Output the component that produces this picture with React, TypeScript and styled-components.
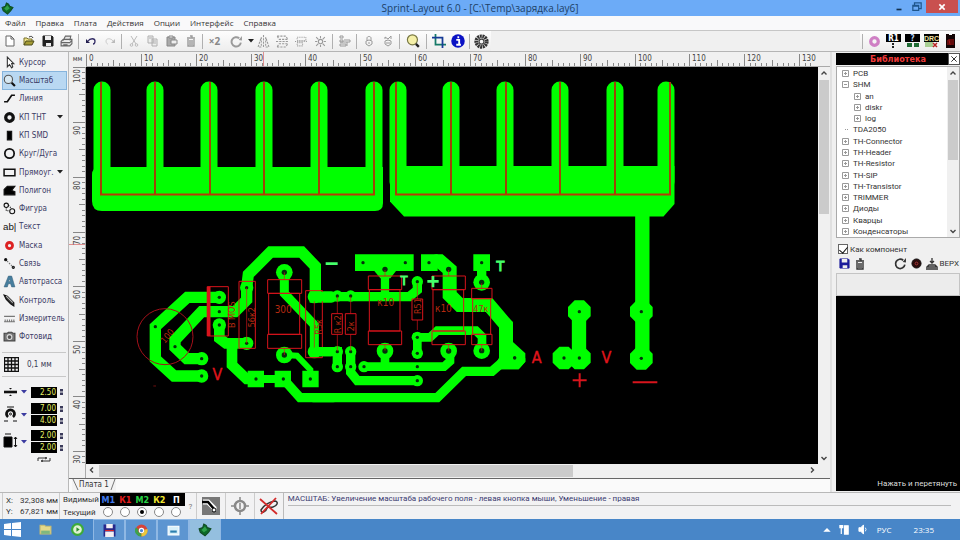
import React from "react";
import styled, { createGlobalStyle, css } from "styled-components";

const UI = `"DejaVu Sans Condensed", "Noto Sans", sans-serif`;
const NARROW = `Roboto, "Noto Sans", sans-serif`;
const SEGOE = `"Open Sans", "Noto Sans", sans-serif`;

const Global = createGlobalStyle`
  * { box-sizing: border-box; }
  html, body, #root { height: 100%; margin: 0; }
  body { background: #f0f0f0; font-family: ${UI}; font-size: 8px; color: #333; overflow: hidden; }
  button, input { font: inherit; color: inherit; margin: 0; padding: 0; border: 0; background: none; }
  svg { display: block; flex: none; }
`;

const Window = styled.div`
  height: 100vh;
  display: flex;
  flex-direction: column;
`;

const TitleBar = styled.header`
  display: flex;
  height: 16px;
  background: #6cabf7;
`;
const TitleSide = styled.div<{ $end?: boolean }>`
  flex: 1;
  display: flex;
  align-items: ${(p) => (p.$end ? "flex-start" : "center")};
  justify-content: ${(p) => (p.$end ? "flex-end" : "flex-start")};
  padding: 0 2px 0 1px;
`;
const Title = styled.h1`
  margin: 0;
  font: 400 10px/16px ${SEGOE};
  color: #1d3f66;
  white-space: nowrap;
`;
const WindowButton = styled.button<{ $close?: boolean }>`
  display: grid;
  place-items: center;
  width: ${(p) => (p.$close ? "32px" : "18px")};
  height: 13px;
  background: ${(p) => (p.$close ? "#c9504f" : "transparent")};
`;

const MenuBar = styled.nav`
  display: flex;
  gap: 10px;
  height: 14px;
  padding-left: 5px;
  background: #f9f9fa;
`;
const MenuItem = styled.button`
  font: 8px/14px ${SEGOE};
  color: #333;
`;

const Toolbar = styled.div`
  display: flex;
  align-items: center;
  height: 22px;
  background: #f0f0f0;
  border-top: 1px solid #c6c6c6;
  border-bottom: 1px solid #b4b4b4;
`;
const ToolbarFade = styled.div<{ $end?: boolean }>`
  display: flex;
  align-items: center;
  height: 20px;
  background: linear-gradient(#fdfdfd, #ededed);
  margin-left: ${(p) => (p.$end ? "auto" : "0")};
`;
const ToolButton = styled.button<{ $w?: number; $off?: boolean }>`
  display: grid;
  place-items: center;
  width: ${(p) => p.$w || 19}px;
  height: 20px;
  color: ${(p) => (p.$off ? "#9a9a9a" : "#222")};
`;
const Times = styled.span`
  font: 700 10px ${SEGOE};
  color: #888;
`;
const Divider = styled.span`
  width: 1px;
  height: 15px;
  margin: 0 2px;
  background: #b0b0b0;
`;

const Main = styled.main`
  flex: 1;
  min-height: 0;
  display: flex;
`;
const Sidebar = styled.aside`
  width: 69px;
  padding: 1px 2px 0 2px;
  border-right: 1px solid #b9b9b9;
  background: #f2f2f3;
`;
const ToolList = styled.div`
  display: grid;
  grid-template-rows: repeat(16, 1fr);
  height: 293px;
`;
const Tool = styled.button<{ $on?: boolean }>`
  display: flex;
  align-items: center;
  gap: 3px;
  width: 65px;
  padding-right: 3px;
  border: 1px solid ${(p) => (p.$on ? "#86b4dc" : "transparent")};
  background: ${(p) => (p.$on ? "#b9d8f2" : "transparent")};
  color: #3c3c66;
  text-align: left;
  white-space: nowrap;
`;
const ToolLabel = styled.span`
  flex: 1;
`;
const Section = styled.div`
  display: flex;
  align-items: center;
  height: 25px;
  margin-top: 6px;
  padding-left: 2px;
  border-top: 1px solid #c8c8c8;
  border-bottom: 1px solid #c8c8c8;
`;
const GridButton = styled.button`
  display: flex;
  align-items: center;
  gap: 8px;
  color: #3c3c55;
`;
const Sizes = styled.div`
  display: flex;
  flex-direction: column;
  gap: 4px;
  padding-top: 8px;
`;
const SizeRow = styled.div`
  display: flex;
  align-items: center;
  gap: 2px;
`;
const SizeFields = styled.div`
  display: flex;
  flex-direction: column;
  gap: 1px;
  margin-left: 2px;
`;
const SizeField = styled.label`
  display: flex;
  align-items: center;
  gap: 3px;
`;
const SizeInput = styled.input`
  width: 26px;
  height: 11px;
  padding-right: 1px;
  background: #000;
  color: #e6f062;
  font: 8px/11px ${UI};
  text-align: right;
`;
const Swap = styled.button`
  align-self: center;
  margin-left: 20px;
  height: 5px;
`;

const Workspace = styled.section`
  flex: 1;
  min-width: 0;
  display: flex;
  flex-direction: column;
  background: #f0f0f0;
`;
const Board = styled.div`
  flex: 1;
  min-height: 0;
  display: grid;
  grid-template: 15px minmax(0, 1fr) 14px / 17px minmax(0, 1fr) 12px;
`;
const Unit = styled.div`
  font-size: 7px;
  line-height: 14px;
  text-align: center;
`;
const TopRuler = styled.div`
  overflow: hidden;
  grid-column: span 2;
  border-bottom: 1px solid #aaa;
`;
const SideRuler = styled.div`
  overflow: hidden;
  grid-row: span 2;
  border-right: 1px solid #aaa;
`;
const Canvas = styled.div`
  overflow: hidden;
  background: #000;
`;
const Scroll = styled.div<{ $row?: boolean }>`
  display: flex;
  flex-direction: ${(p) => (p.$row ? "row" : "column")};
  background: #f0f0f0;
  min-height: 0;
`;
const Arrow = styled.button`
  display: grid;
  place-items: center;
  width: 12px;
  height: 12px;
  color: #444;
`;
const Track = styled.div<{ $row?: boolean }>`
  flex: 1;
  min-height: 0;
  display: flex;
  flex-direction: ${(p) => (p.$row ? "row" : "column")};
`;
const Thumb = styled.div<{ $part: number }>`
  flex: 0 0 ${(p) => p.$part}%;
  margin: 1px;
  background: #cbcbcb;
`;
const TabStrip = styled.div`
  height: 14px;
  display: flex;
  border-top: 1px solid #666;
  background: #fafafa;
`;
const BoardTab = styled.button`
  display: flex;
  align-items: flex-start;
  line-height: 11px;
  background: #f3f3f3;
  margin-left: 3px;
`;

const Library = styled.aside`
  width: 130px;
  display: flex;
  flex-direction: column;
  padding: 1px 0 1px 4px;
  border-left: 2px solid #e0e0e0;
  font-family: ${NARROW};
`;
const LibraryHead = styled.div`
  display: flex;
  height: 12px;
  background: #000;
`;
const LibraryTitle = styled.h2`
  flex: 1;
  margin: 0;
  padding-left: 12px;
  font: 700 9px/12px ${UI};
  color: #f03a3a;
  text-align: center;
`;
const CloseButton = styled.button`
  display: grid;
  place-items: center;
  width: 12px;
  background: #fff;
  border: 1px solid #555;
`;
const TreeBox = styled.div`
  display: flex;
  height: 172px;
  margin-top: 1px;
  border: 1px solid #aaa;
  background: #fff;
`;
const Tree = styled.ul`
  flex: 1;
  margin: 0;
  padding: 1px 0 0 5px;
  list-style: none;
  display: grid;
  grid-template-rows: repeat(15, 1fr);
  color: #333;
`;
const Node = styled.li<{ $deep?: boolean }>`
  display: flex;
  align-items: center;
  gap: 4px;
  line-height: 11px;
  padding-left: ${(p) => (p.$deep ? "12px" : "0")};
`;
const Check = styled.label`
  display: flex;
  align-items: center;
  gap: 2px;
  height: 16px;
  padding: 6px 2px 0;
`;
const CheckInput = styled.input`
  appearance: none;
  flex: none;
  width: 10px;
  height: 10px;
  border: 1px solid #666;
  background: #fff;
  display: grid;
  place-items: center;
  &:checked::after {
    content: "";
    width: 4px;
    height: 7px;
    border: solid #111;
    border-width: 0 1px 1px 0;
    transform: rotate(40deg);
  }
`;
const LibraryTools = styled.div`
  display: flex;
  align-items: center;
  gap: 4px;
  height: 19px;
  padding: 0 1px 0 3px;
`;
const Spacer = styled.span`
  flex: 1;
`;
const BareButton = styled.button`
  display: flex;
  align-items: center;
  gap: 2px;
`;
const InfoBox = styled.div`
  height: 23px;
  border: 1px solid #c4c4c4;
  background: #ececec;
`;
const Preview = styled.div`
  flex: 1;
  display: flex;
  align-items: flex-end;
  justify-content: flex-end;
  padding: 2px 3px;
  background: #000;
  color: #ddd;
  line-height: 10px;
`;

const StatusBar = styled.footer`
  display: flex;
  height: 27px;
  border-top: 1px solid #b8b8b8;
  background: #f2f2f3;
  font-family: ${NARROW};
`;
const Coords = styled.dl`
  display: grid;
  grid-template-columns: auto 1fr;
  width: 58px;
  margin: 0 0 0 2px;
  padding: 2px 1px 2px 3px;
  border-left: 1px solid #ccc;
  border-right: 1px solid #ccc;
  line-height: 11px;
`;
const CoordName = styled.dt``;
const CoordValue = styled.dd`
  margin: 0;
  text-align: right;
`;
const Layers = styled.table`
  margin-left: 3px;
  border-collapse: collapse;
  height: 25px;
  line-height: 11px;
`;
const LayerTitle = styled.th`
  padding: 0 1px 0 0;
  width: 34px;
  font-weight: 400;
  text-align: left;
  font-size: 8px;
`;
const LayerName = styled.th<{ $c: string }>`
  width: 17px;
  padding: 0;
  background: #000;
  color: ${(p) => p.$c};
  font: 700 9px/12px ${UI};
`;
const LayerCell = styled.td`
  padding: 0;
`;
const LayerRadio = styled.input`
  appearance: none;
  display: grid;
  place-items: center;
  width: 10px;
  height: 10px;
  margin: 0 auto;
  border: 1px solid #888;
  border-radius: 50%;
  background: #fff;
  &:checked::after {
    content: "";
    width: 4px;
    height: 4px;
    border-radius: 50%;
    background: #000;
  }
`;
const HelpButton = styled.button`
  width: 11px;
  color: #777;
`;
const ModeButton = styled.button`
  display: grid;
  place-items: center;
  width: 29px;
  border-left: 1px solid #ccc;
`;
const Hint = styled.p`
  flex: 1;
  margin: 0 9px 0 0;
  padding-left: 4px;
  border-left: 1px solid #bbb;
  color: #3a3a70;
`;
const HintText = styled.span`
  display: block;
  line-height: 12px;
  border-bottom: 1px solid #bbb;
`;

const Taskbar = styled.footer`
  display: flex;
  height: 21px;
  background: #4886c8;
  color: #fff;
`;
const TaskButton = styled.button<{ $open?: boolean; $active?: boolean }>`
  display: grid;
  place-items: center;
  width: 32px;
  ${(p) =>
    p.$open &&
    css`
      border: 1px solid #8fb8e4;
      border-bottom: 0;
      background: ${p.$active ? "#94bfdf" : "#5d95d1"};
    `}
`;
const Start = styled(TaskButton)`
  width: 29px;
  padding-right: 4px;
`;
const Tray = styled.div`
  margin-left: auto;
  display: flex;
  align-items: center;
  gap: 8px;
  padding-right: 26px;
  font: 8px ${SEGOE};
`;
const Lang = styled.span`
  margin-right: 14px;
`;

type IconProps = { s?: number; children: React.ReactNode; w?: number };
const Icon = ({ s = 12, w = 1, children }: IconProps) => (
  <svg width={s} height={s} viewBox="0 0 12 12" fill="none" stroke="currentColor" strokeWidth={w} aria-hidden="true">
    {children}
  </svg>
);

const Gem = ({ s = 12 }) => (
  <Icon s={s}>
    <path d="M1 5l3-1 1-3 2 1 1 2 3 1-2 3-3 3-4-3z" fill="#0b6b27" stroke="#114d24" />
    <path d="M3 6l3-3 2 3-3 2z" fill="#2fa04a" stroke="none" />
  </Icon>
);
const Floppy = ({ c = "#222", s = 12 }: { c?: string; s?: number }) => (
  <Icon s={s}>
    <path d="M1 1h9l1 1v9H1z" fill={c} stroke={c} />
    <path d="M3 1h6v4H3zM4 8h5v3H4z" fill="#eee" stroke="none" />
  </Icon>
);
const Trash = () => (
  <Icon>
    <path d="M2 3h8M5 1h2v2M3 4v7h6V4M5 5v5M7 5v5" strokeWidth="1.4" />
  </Icon>
);
const Rotate = ({ s = 13, w = 1.8 }) => (
  <Icon s={s} w={w}>
    <path d="M10 7a4.3 4.3 0 1 1-1.5-4" />
    <path d="M8 4.5 11 5V1z" fill="currentColor" stroke="none" />
  </Icon>
);
const Caret = ({ c = "#222" }) => (
  <svg width="6" height="4" viewBox="0 0 6 4" aria-hidden="true">
    <path d="M0 0h6L3 3.5z" fill={c} />
  </svg>
);
const Chevron = ({ d }: { d: string }) => (
  <svg width="8" height="8" viewBox="0 0 8 8" fill="none" stroke="currentColor" strokeWidth="1.4" aria-hidden="true">
    <path d={d} />
  </svg>
);
const UP = "M1.5 5.5 4 3l2.5 2.5";
const DOWN = "M1.5 3 4 5.5 6.5 3";
const LEFT = "M5 1.5 2.5 4 5 6.5";
const RIGHT = "M3 1.5 5.5 4 3 6.5";

type Item = { n: string; i?: React.ReactNode; off?: boolean; w?: number } | null;
const toolbar: Item[] = [
  { n: "Новый", i: <Icon><path d="M2 1h5l3 3v7H2zM7 1v3h3" stroke="#666" fill="#fff" /></Icon> },
  { n: "Открыть", i: <Icon><path d="M1 10V3h3l1 1h4v2" fill="#f2e58c" stroke="#77702a" /><path d="M1 10 3 6h8l-2 4z" fill="#a49b35" stroke="#4d4c1b" /><path d="M6 2c2-1 3-1 4 1" stroke="#333" /></Icon> },
  { n: "Сохранить", i: <Floppy /> },
  { n: "Печать", i: <Icon s={13}><path d="M3 5 5 1h5L9 5M1 6l2-2h8v4l-2 2H1zM1 7h8l2-2M3 9h4" stroke="#666" fill="#e6e6e6" /></Icon> },
  null,
  { n: "Отменить", i: <Icon w={1.3}><path d="M3 6c2-3 7-3 7 0 0 2-1 3-2 3" stroke="#332d66" /><path d="M1 4v4h4z" fill="#221d4d" stroke="none" /></Icon> },
  { n: "Вернуть", off: true, i: <Icon><path d="M9 6C7 3 2 3 2 6c0 2 1 3 2 3" stroke="#ccc" /><path d="M11 4v4H7z" fill="#bbb" stroke="none" /></Icon> },
  null,
  { n: "Вырезать", off: true, i: <Icon><path d="m3 1 5 8M9 1 4 9" stroke="#bbb" /><circle cx="3.500" cy="10" r="1.300" stroke="#bbb" /><circle cx="8.500" cy="10" r="1.300" stroke="#bbb" /></Icon> },
  { n: "Копировать", off: true, i: <Icon><path d="M1 1h5v7H1zM5 4h5v7H5zM6 6h3M6 8h3M2 3h3" stroke="#b0b0b0" fill="#eee" /></Icon> },
  { n: "Вставить", off: true, i: <Icon><path d="M1 2h8v9H1z" fill="#aaa" stroke="#888" /><path d="M3 1h4v2H3zM5 5h6v4H5z" fill="#eee" stroke="#888" /></Icon> },
  { n: "Удалить", off: true, i: <Trash /> },
  null,
  { n: "Дублировать", i: <Times>×2</Times> },
  { n: "Повернуть", off: true, w: 24, i: <Rotate /> },
  { n: "Угол поворота", w: 6, i: <Caret /> },
  { n: "Отразить по горизонтали", off: true, i: <Icon s={13}><path d="M6 0v12M4 2v9H1zM8 2v9h3z" strokeDasharray="2 1" /></Icon> },
  { n: "Отразить по вертикали", off: true, i: <Icon s={13}><path d="M0 6h12M1 1h8l2 3H3zM1 11h8l2-3H3z" strokeDasharray="2 1" /></Icon> },
  { n: "Выровнять", off: true, i: <Icon s={13}><path d="M0 6h12M2 2h8v3H2zM2 7h5v3H2z" strokeDasharray="1 1" /></Icon> },
  { n: "Привязать к сетке", off: true, i: <Icon s={13}><circle cx="6" cy="6" r="2" /><path d="M6 1v2M6 9v2M1 6h2M9 6h2M2 2l2 2M8 8l2 2M10 2 8 4M2 10l2-2" /></Icon> },
  null,
  { n: "Группировать", off: true, i: <Icon><path d="M1 1h3v2H1zM1 5h3v2H1zM5 5h6v2H1M1 9h6v2H1zM8 7v4" /></Icon> },
  null,
  { n: "Закрепить", off: true, i: <Icon><path d="M4 5V3c0-2 4-2 4 0v2M3 6l3-1 3 1v3l-3 2-3-2zM6 7v2" /></Icon> },
  { n: "Открепить", off: true, i: <Icon><path d="M3 4V2l3 2 3-3v3M3 6l3-1 3 1v3l-3 2-3-2zM4 8h4" /></Icon> },
  null,
  { n: "Масштаб", w: 22, i: <Icon s={14}><circle cx="5.500" cy="5" r="4.300" fill="#f5f0a8" stroke="#777743" /><path d="m8.500 8.500 2.500 2.500" stroke="#222" strokeWidth="2" /></Icon> },
  null,
  { n: "Шаблон", i: <Icon s={14} w={1.5}><path d="M3 0v9h9" stroke="#167a68" /><path d="M0 3h9v9" stroke="#173c96" /></Icon> },
  { n: "Информация", i: <Icon s={14}><circle cx="6" cy="6" r="5.800" fill="#0b12c4" stroke="none" /><path d="M4.500 5H7v4M4.500 9.200h4M5.500 2.800H7" stroke="#fff" strokeWidth="1.600" /></Icon> },
  null,
  { n: "Контроль", i: <Icon s={15}><circle cx="6" cy="6" r="4.200" stroke="#333" strokeWidth="3" strokeDasharray="1.500 .5" /><circle cx="6" cy="6" r="2" stroke="#444" /></Icon> },
];

const Plate = ({ t, c, low }: { t: string; c: string; low: React.ReactNode }) => (
  <svg width="15" height="14" viewBox="0 0 15 14" aria-hidden="true">
    <path d="M0 0h15v8H0z" fill="#000" />
    <text x="7.500" y="7" fontSize={t.length > 2 ? 7 : 8} fontWeight="700" textAnchor="middle" fill={c} fontFamily={t.length > 2 ? "Liberation Sans" : "DejaVu Sans Condensed"}>{t}</text>
    {low}
  </svg>
);
const panels: { n: string; i: React.ReactNode }[] = [
  { n: "Прозрачность", i: <Icon s={13}><circle cx="6" cy="6" r="3.500" stroke="#cf7fc4" strokeWidth="3" /></Icon> },
  { n: "Компоненты", i: <Plate t="R1" c="#fff" low={<path d="M6 9h2v2H6zM6 12h2v2H6z" fill="#222" />} /> },
  { n: "Свойства", i: <Plate t="?" c="#b9d8f7" low={<path d="M2 9h5v4H2zM9 9h5v4H9z" fill="#206c35" />} /> },
  { n: "Проверка", i: <Plate t="DRC" c="#f0e0a0" low={<><path d="M1 8h8v5H1z" fill="#a8cf93" /><path d="m9 9 4 4m0-4-4 4" stroke="#b82323" strokeWidth="1.500" /></>} /> },
  { n: "Библиотека", i: <svg width="9" height="14" viewBox="0 0 9 14" aria-hidden="true"><path d="M0 0h3v1h3V0h3v14H0z" fill="#120303" /><path d="M2 6v5M3 5l1 6M5 5v6M7 5v6" stroke="#b31515" /></svg> },
];

const tools: { n: string; i: React.ReactNode; menu?: boolean }[] = [
  { n: "Курсор", i: <path d="M4 1v9l2-2 2 3 1-1-1-3h2z" fill="#fff" stroke="#333" /> },
  { n: "Масштаб", i: <><circle cx="5" cy="5" r="3.800" fill="#d7e8f2" stroke="#555" /><path d="m8 8 3 3" stroke="#111" strokeWidth="2" /></> },
  { n: "Линия", i: <path d="M1 9h3l4-6h3" strokeWidth="1.600" /> },
  { n: "КП THT", menu: true, i: <circle cx="6" cy="6" r="3.500" strokeWidth="3" /> },
  { n: "КП SMD", i: <path d="M4 2h4v8H4z" fill="#000" /> },
  { n: "Круг/Дуга", i: <circle cx="6" cy="6" r="4.300" strokeWidth="1.600" /> },
  { n: "Прямоуг.", menu: true, i: <path d="M1 3h10v6H1z" strokeWidth="1.400" /> },
  { n: "Полигон", i: <path d="M1 10V5l3-3h7L8 6l3 1v3z" fill="#000" /> },
  { n: "Фигура", i: <><circle cx="3" cy="3" r="2" /><circle cx="8.500" cy="8.500" r="2.300" /><path d="M3 5v3h3M5 3l3 3" strokeDasharray="1 1" /></> },
  { n: "Текст", i: <text x="0" y="9" fontSize="9" fontFamily="Liberation Sans" fill="#111" stroke="none">ab|</text> },
  { n: "Маска", i: <circle cx="6" cy="6" r="2.800" stroke="#d22" strokeWidth="2.600" /> },
  { n: "Связь", i: <><path d="m2 2 8 8" strokeDasharray="1.500 1" stroke="#777" /><circle cx="2.500" cy="2.500" r="1" fill="#000" /><circle cx="9.500" cy="9.500" r="1" /></> },
  { n: "Автотрасса", i: <path d="M1 11 5 1h3l3 10H8L7 8H5l-1 3zM6 4 5 6h2z" fill="#467e9e" stroke="#39607a" strokeWidth=".5" /> },
  { n: "Контроль", i: <><path d="m1 1 3 1 6 6v3L7 9 3 5z" fill="#333" /><path d="m3 2 6 6" stroke="#bbb" /></> },
  { n: "Измеритель", i: <path d="M1 4h10M1 9h10M2 7v2M4 7v2M6 7v2M8 7v2M10 7v2" stroke="#777" /> },
  { n: "Фотовид", i: <><path d="M1 3h3l1-1h3l1 1h2v7H1z" fill="#777" stroke="#444" /><circle cx="6" cy="6.500" r="2.200" stroke="#ddd" fill="#555" /></> },
];

const Spin = () => (
  <svg width="3" height="8" viewBox="0 0 3 8" aria-hidden="true"><path d="M0 1h3v2.500H0zM0 4.500h3V7H0z" fill="#3a3a5a" /></svg>
);
const sizes: { n: string; v: string[]; i: React.ReactNode }[] = [
  { n: "Ширина", v: ["2.50"], i: <><path d="M0 5h13" strokeWidth="2.600" /><path d="M5 1h3l-1.500 1.500zM5 9h3l-1.500-1.500z" fill="#111" stroke="none" /></> },
  { n: "Площадка", v: ["7.00", "4.00"], i: <><path d="M4 8a4 4 0 1 1 5 0" strokeWidth="2.800" /><circle cx="6.500" cy="5" r="1" /><path d="M0 12h4M9 12h4M3 -2h7" /></> },
  { n: "SMD", v: ["2.00", "2.00"], i: <><path d="M0 1h8v10H0z" fill="#000" /><path d="M11.500 1v10M10 3l1.500-2L13 3M10 9l1.500 2L13 9M1 -2h6" /></> },
];

const tree: { t: string; deep?: boolean; k?: "+" | "-" }[] = [
  { t: "PCB", k: "+" }, { t: "SHM", k: "-" },
  { t: "an", k: "+", deep: true }, { t: "diskr", k: "+", deep: true }, { t: "log", k: "+", deep: true },
  { t: "TDA2050" }, { t: "TH-Connector", k: "+" }, { t: "TH-Header", k: "+" }, { t: "TH-Resistor", k: "+" },
  { t: "TH-SIP", k: "+" }, { t: "TH-Transistor", k: "+" }, { t: "TRIMMER", k: "+" },
  { t: "Диоды", k: "+" }, { t: "Кварцы", k: "+" }, { t: "Конденсаторы", k: "+" },
];
const Twisty = ({ k }: { k?: "+" | "-" }) => (
  <svg width="7" height="7" viewBox="0 0 7 7" stroke="#999" fill="none" aria-hidden="true">
    {k ? <path d={`M.5.5h6v6h-6zM2 3.500h3${k === "+" ? "M3.500 2v3" : ""}`} /> : <path d="M3 3.500h4" strokeDasharray="1 1" />}
  </svg>
);

/* Rulers: one millimetre is 5.485 px at the current zoom. */
const MM = 5.485;
const TopScale = () => (
  <svg width="732" height="14" viewBox="0 0 732 14" stroke="#888" fontFamily="DejaVu Sans Condensed" fontSize="8">
    {Array.from({ length: 133 }, (_, i) => (
      <path key={i} d={`M${Math.round(i * MM) + 0.5} 14v${i % 10 === 0 ? -12 : i % 5 === 0 ? -6 : -3}`} />
    ))}
    <path d="M177.500 0v14" stroke="#e09090" />
    {Array.from({ length: 14 }, (_, i) => (
      <text key={i} x={Math.round(i * 10 * MM) + 3} y="9" fill="#444" stroke="none">{i * 10}</text>
    ))}
  </svg>
);
const SideScale = () => (
  <svg width="16" height="396" viewBox="0 0 16 396" stroke="#888" fontFamily="DejaVu Sans Condensed" fontSize="8">
    {Array.from({ length: 73 }, (_, i) => (
      <path key={i} d={`M16 ${Math.round(i * MM) + 0.5}h${i % 10 === 0 ? -12 : i % 5 === 0 ? -6 : -3}`} />
    ))}
    <path d="M0 177.500h16" stroke="#e09090" />
    {Array.from({ length: 8 }, (_, i) => (
      <text key={i} transform={`translate(11 ${Math.round(i * 10 * MM) + (i ? 13 : 16)}) rotate(-90)`} fill="#444" stroke="none">{100 - i * 10}</text>
    ))}
  </svg>
);

const G = "#00ff00";
const leftFingers = [102, 155, 209, 264, 319, 374];
const rightFingers = [398, 451, 505, 560, 615, 666];
const leftLines = [101, 155, 210, 264, 319, 374];
const rightLines = [396, 451, 506, 560, 615, 670];

const Trace = ({ d, w = 28 }: { d: string; w?: number }) => (
  <path d={d} stroke={G} strokeWidth={w} fill="none" strokeLinecap="round" strokeLinejoin="miter" />
);
const Holes = ({ at, r = 5 }: { at: number[][]; r?: number }) => (
  <>{at.map(([x, y]) => <circle key={`${x}-${y}`} cx={x} cy={y} r={r} fill="#03300a" />)}</>
);
const Pads = ({ at, r }: { at: number[][]; r: number }) => (
  <>{at.map(([x, y]) => <circle key={`${x}-${y}`} cx={x} cy={y} r={r} fill={G} />)}</>
);
const oct = (x: number, y: number) =>
  `M${x - 14} ${y - 34}h28l20 20v28l-20 20h-28l-20-20v-28z`;

const Pcb = () => (
  <svg width="732" height="396" viewBox="86 67 732 396" role="img" aria-label="Плата" fontFamily="DejaVu Sans Condensed">
    <path d="M92 175q0-8 8-8h283v36q0 8-8 8H102q-10 0-10-10z" fill={G} />
    <path d="M390 166h284.500v38l-11 12.500H404l-14-15z" fill={G} />
    {[...leftFingers, ...rightFingers].map((x) => (
      <path key={x} d={`M${x} 90v92`} stroke={G} strokeWidth="17" strokeLinecap="round" />
    ))}
    <g stroke="#a04408" strokeWidth="2" fill="none">
      {leftLines.map((x) => <path key={x} d={`M${x} 82v113`} />)}
      {rightLines.map((x) => <path key={x} d={`M${x} 82v113`} />)}
      <path d="M100 194.500h275M395 194.500h276" stroke="#b83a06" />
    </g>

    <g transform="translate(500 190) scale(.33333)">
      <path d="M427 70v435M237 365v140M190 504h48" stroke={G} strokeWidth="43" />
      <path d={oct(424, 365) + oct(424, 505) + oct(238, 365) + oct(238, 504) + oct(192, 504)} fill={G} />
      <path d="M0 365 38 395v60l38 35v25l-20 23H0z" fill={G} />
      <Holes at={[[424, 365], [424, 505], [238, 365], [238, 504], [192, 504], [44, 504]]} />
      <g stroke="#d8141c" strokeWidth="6" fill="none">
        <path d="M218 571h42M239 550v42M398 577h74" />
      </g>
      <g fill="#e0141c" fontSize="48" textAnchor="middle" stroke="#e0141c" strokeWidth="1">
        <text x="110" y="520">A</text>
        <text x="319" y="520">V</text>
      </g>
    </g>

    <g transform="translate(130 230) scale(.33333)">
      <Trace w={34} d="M268 202H172L76 290v97l56 51h83" />
      <Trace w={34} d="M215 386h-45l-35-34v-22l80-85h100l35-35v-37l5-40 67-67h93l41 43v92h48" />
      <Trace w={32} d="M268 285v40l20 15h62M306 345v60l44 42h28" />
      <Trace w={24} d="M378 447h82" />
      <Trace w={28} d="M460 447l50 56h100" />
      <path d="M353 422h49v50h-49zM434 422h49v50h-49zM517 422h49v50h-49z" fill={G} />
      <Trace w={27} d="M463 127v63l90 95v80h50" />
      <Trace w={18} d="M463 375l38 2 40 42v28" />
      <Pads r={25} at={[[463, 127], [463, 375]]} />
      <Pads r={20} at={[[268, 202], [268, 285], [350, 340], [215, 386], [215, 438], [553, 200], [553, 365], [350, 173]]} />
      <Holes at={[[268, 202], [268, 245], [268, 285], [350, 340], [350, 173], [76, 290], [135, 350], [215, 386], [215, 438], [553, 200], [553, 365], [378, 447], [460, 447], [541, 447]]} />
      <Holes r={8} at={[[463, 127], [463, 375]]} />
      <g fill="none" stroke="#d8141c" strokeWidth="3">
        <path d="M232 170h63v148h-63zM327 154h49v201h-49zM527 182h50v201h-50z" />
        <path d="M413 149h102v41H413zM416 190h93v123h-93zM413 313h102v42H413z" />
        <path d="M463 127v22M463 355v20M350 173v167M553 200v165" strokeWidth="2" />
        <circle cx="105" cy="320" r="84" stroke="#a5101a" />
        <path d="M236 170v148" strokeWidth="11" />
      </g>
      <g fill="#b52a10" fontSize="27">
        <text x="434" y="250" fontSize="30">300</text>
        <text transform="translate(374 292) rotate(-90)">56к2</text>
        <text transform="translate(315 294) rotate(-90)">B MOS</text>
        <text transform="translate(577 314) rotate(-90)">R5к</text>
        <text transform="translate(104 342) rotate(-50)">100</text>
      </g>
      <text x="262" y="449" textAnchor="middle" fontSize="48" fill="#e0141c" stroke="#e0141c" strokeWidth="1">V</text>
      <path d="M70 468h8" stroke="#701010" strokeWidth="3" />
    </g>

    <g transform="translate(320 230) scale(.33333)">
      <Trace d="M-20 200h288l24-20v-25" />
      <path d="M105 73h176v50h-53l-17 22h-30l-18-22h-58zM303 73h50v50h-50zM460 73h50v50h-50z" fill={G} />
      <Trace w={25} d="M195 118v82" />
      <Trace w={42} d="M350 94h10l29 25v76l30 30h88l51 60v100" />
      <Trace w={28} d="M485 100v57" />
      <Trace w={28} d="M-20 503h372l80-79h84l32-28" />
      <Trace w={28} d="M-10 365h62v45M92 365v62l20 25h180" />
      <Trace w={26} d="M132 410h240l18-16v-31M195 363v47" />
      <Trace w={26} d="M292 370v-48h38l22-20h116l18 18v42" />
      <Pads r={25} at={[[195, 363], [386, 363], [485, 362], [485, 157]]} />
      <Pads r={17} at={[[52, 198], [92, 198], [292, 155], [52, 365], [52, 410], [92, 365], [92, 410], [132, 410], [292, 322], [292, 370], [292, 452]]} />
      <path d="M536 385h80v10l-20 23h-76z" fill={G} />
      <Holes at={[[129, 98], [256, 98], [327, 98], [485, 98], [52, 198], [92, 198], [292, 155], [52, 365], [52, 410], [92, 365], [92, 410], [132, 410], [292, 322], [292, 370], [292, 410], [292, 452], [584, 384]]} />
      <Holes r={8} at={[[195, 118], [386, 118], [195, 363], [386, 363], [485, 362], [485, 157]]} />
      <g fill="none" stroke="#d8141c" strokeWidth="3">
        <path d="M145 138h100v41H145zM148 179h92v124h-92zM145 303h100v41H145z" />
        <path d="M336 138h100v41H336zM339 179h92v124h-92zM336 303h100v41H336z" />
        <path d="M455 175h61v31h-61zM458 206h54v107h-54zM455 313h61v31h-61z" />
        <path d="M35 251h32v62H35zM76 251h32v62H76zM276 207h32v63h-32z" />
        <path d="M52 200v51M52 313v50M92 200v51M92 313v50M292 160v47M292 270v30M195 120v18M195 344v18M386 120v18M386 344v18M485 344v18M485 160v15" strokeWidth="2" />
      </g>
      <g fill="#b52a10" fontSize="27">
        <text x="172" y="229" fontSize="30">к10</text>
        <text x="345" y="247" fontSize="30">к10</text>
        <text x="460" y="247">47к</text>
        <text transform="translate(62 310) rotate(-90)">R к2</text>
        <text transform="translate(102 304) rotate(-90)">2к</text>
        <text transform="translate(302 252) rotate(-90)">R51</text>
      </g>
      <g stroke="#45ff6a" strokeWidth="8" fill="none">
        <path d="M17 101h36M322 154h34M339 138v34" />
      </g>
      <g fill="#45ff6a" stroke="#45ff6a" strokeWidth="3" fontSize="42" textAnchor="middle">
        <text x="252" y="165" fontSize="36">T</text>
        <text x="541" y="123">T</text>
      </g>
    </g>
  </svg>
);

const layers = [
  { n: "М1", c: "#3f78e8" }, { n: "К1", c: "#e01c1c" }, { n: "М2", c: "#27d344" }, { n: "К2", c: "#f0e62e" }, { n: "П", c: "#fff" },
];

export default function App() {
  return (
    <Window>
      <Global />
      <TitleBar>
        <TitleSide><Gem s={13} /></TitleSide>
        <Title>Sprint-Layout 6.0 - [C:\Temp\зарядка.lay6]</Title>
        <TitleSide $end>
          <WindowButton aria-label="Свернуть"><Icon s={10}><path d="M3 9h6" stroke="#12304f" strokeWidth="2" /></Icon></WindowButton>
          <WindowButton aria-label="Восстановить"><Icon s={10}><path d="M1 4h7v6H1zM3 4V1h8v7H8M1 5h7" stroke="#1f568c" strokeWidth="1.500" /></Icon></WindowButton>
          <WindowButton $close aria-label="Закрыть"><Icon s={8}><path d="m2 2 8 8m0-8-8 8" stroke="#fff" strokeWidth="2.400" /></Icon></WindowButton>
        </TitleSide>
      </TitleBar>
      <MenuBar>
        {["Файл", "Правка", "Плата", "Действия", "Опции", "Интерфейс", "Справка"].map((m) => <MenuItem key={m}>{m}</MenuItem>)}
      </MenuBar>
      <Toolbar>
        <ToolbarFade>
          {toolbar.map((b, i) => b
            ? <ToolButton key={i} aria-label={b.n} $off={b.off} $w={b.w}>{b.i}</ToolButton>
            : <Divider key={i} />)}
        </ToolbarFade>
        <ToolbarFade $end>
          <Divider />
          {panels.map((p) => <ToolButton key={p.n} aria-label={p.n}>{p.i}</ToolButton>)}
        </ToolbarFade>
      </Toolbar>

      <Main>
        <Sidebar>
          <ToolList>
            {tools.map((t, i) => (
              <Tool key={t.n} $on={i === 1}>
                <Icon s={13}><g stroke="#111" strokeWidth="1">{t.i}</g></Icon>
                <ToolLabel>{t.n}</ToolLabel>
                {t.menu && <Caret />}
              </Tool>
            ))}
          </ToolList>
          <Section>
            <GridButton>
              <svg width="15" height="15" viewBox="0 0 15 15" stroke="#111" fill="none" aria-hidden="true">
                <path d="M.5.5h14v14H.5zM4 0v15M7.500 0v15M11 0v15M0 4h15M0 7.500h15M0 11h15" strokeWidth="1.300" />
              </svg>
              0,1 мм
            </GridButton>
          </Section>
          <Sizes>
            {sizes.map((s) => (
              <SizeRow key={s.n}>
                <svg width="17" height={s.v.length > 1 ? 17 : 14} viewBox={s.v.length > 1 ? "-2 -3 17 17" : "-2 -2 17 14"} stroke="#111" fill="none" aria-hidden="true">{s.i}</svg>
                <BareButton aria-label={s.n}><Caret c="#3b3ba0" /></BareButton>
                <SizeFields>
                  {s.v.map((v, i) => (
                    <SizeField key={i}>
                      <SizeInput aria-label={`${s.n} ${i + 1}`} defaultValue={v} />
                      <Spin />
                    </SizeField>
                  ))}
                </SizeFields>
              </SizeRow>
            ))}
            <Swap aria-label="Поменять местами">
              <svg width="14" height="5" viewBox="0 0 14 5" stroke="#333" fill="none"><path d="M1 4V1h8M5 4h8V1M8 0l2 1-2 1M6 3 4 4l2 1" /></svg>
            </Swap>
          </Sizes>
        </Sidebar>

        <Workspace>
          <Board>
            <Unit>мм</Unit>
            <TopRuler><TopScale /></TopRuler>
            <SideRuler><SideScale /></SideRuler>
            <Canvas><Pcb /></Canvas>
            <Scroll>
              <Arrow aria-label="Вверх"><Chevron d={UP} /></Arrow>
              <Track><Thumb $part={36} /></Track>
              <Arrow aria-label="Вниз"><Chevron d={DOWN} /></Arrow>
            </Scroll>
            <Scroll $row>
              <Arrow aria-label="Влево"><Chevron d={LEFT} /></Arrow>
              <Track $row><Thumb $part={67} /></Track>
              <Arrow aria-label="Вправо"><Chevron d={RIGHT} /></Arrow>
            </Scroll>
          </Board>
          <TabStrip>
            <BoardTab>
              <svg width="7" height="12" viewBox="0 0 7 12" stroke="#777" fill="none" aria-hidden="true"><path d="M1 0l5 11" /></svg>
              Плата 1
              <svg width="7" height="12" viewBox="0 0 7 12" stroke="#777" fill="none" aria-hidden="true"><path d="M6 0 2 11" /></svg>
            </BoardTab>
          </TabStrip>
        </Workspace>

        <Library>
          <LibraryHead>
            <LibraryTitle>Библиотека</LibraryTitle>
            <CloseButton aria-label="Закрыть библиотеку"><Icon s={8}><path d="m2 2 8 8m0-8-8 8" stroke="#333" strokeWidth="1.500" /></Icon></CloseButton>
          </LibraryHead>
          <TreeBox>
            <Tree>
              {tree.map((n) => <Node key={n.t} $deep={n.deep}><Twisty k={n.k} />{n.t}</Node>)}
            </Tree>
            <Scroll>
              <Arrow aria-label="Вверх"><Chevron d={UP} /></Arrow>
              <Track><Thumb $part={55} /></Track>
              <Arrow aria-label="Вниз"><Chevron d={DOWN} /></Arrow>
            </Scroll>
          </TreeBox>
          <Check><CheckInput type="checkbox" defaultChecked />Как компонент</Check>
          <LibraryTools>
            <BareButton aria-label="Сохранить"><Floppy c="#1b1b9b" s={11} /></BareButton>
            <BareButton aria-label="Удалить"><Trash /></BareButton>
            <Spacer />
            <BareButton aria-label="Повернуть"><Rotate s={13} w={1.6} /></BareButton>
            <BareButton aria-label="Метка"><Icon s={11}><circle cx="6" cy="6" r="5" fill="#2a0c0c" stroke="#111" /><circle cx="6" cy="6" r="1.500" stroke="#a33" /></Icon></BareButton>
            <BareButton><Icon><path d="M6 0v4M4 3l2 2 2-2M3 7h6l2 2H1zM0 11h12" strokeWidth="1.300" /></Icon>ВЕРХ</BareButton>
          </LibraryTools>
          <InfoBox />
          <Preview>Нажать и перетянуть</Preview>
        </Library>
      </Main>

      <StatusBar>
        <Coords>
          <CoordName>X:</CoordName><CoordValue>32,308 мм</CoordValue>
          <CoordName>Y:</CoordName><CoordValue>67,821 мм</CoordValue>
        </Coords>
        <Layers>
          <tbody>
            <tr>
              <LayerTitle scope="row">Видимый</LayerTitle>
              {layers.map((l) => <LayerName key={l.n} $c={l.c}>{l.n}</LayerName>)}
            </tr>
            <tr>
              <LayerTitle scope="row">Текущий</LayerTitle>
              {layers.map((l, i) => (
                <LayerCell key={l.n}><LayerRadio type="radio" name="layer" aria-label={l.n} defaultChecked={i === 2} /></LayerCell>
              ))}
            </tr>
          </tbody>
        </Layers>
        <HelpButton>?</HelpButton>
        <ModeButton aria-label="Изгиб дорожки">
          <svg width="18" height="18" viewBox="0 0 18 18" fill="none"><path d="M0 0h18v18H0z" fill="#777" /><path d="M1 5h5l6 6v3" stroke="#fff" strokeWidth="5" /><path d="M0 5h6l6 7" stroke="#000" strokeWidth="2.500" /><circle cx="12" cy="13" r="2" fill="#fff" stroke="#000" /></svg>
        </ModeButton>
        <ModeButton aria-label="Захват">
          <svg width="18" height="18" viewBox="0 0 18 18" fill="none" stroke="#888"><circle cx="9" cy="9" r="5" strokeWidth="2.500" /><path d="M9 0v4M9 14v4M0 9h4M14 9h4M9 6v6" strokeWidth="1.500" /></svg>
        </ModeButton>
        <ModeButton aria-label="Резиновая нить">
          <svg width="20" height="18" viewBox="0 0 20 18" fill="none"><path d="M2 13c3-5 8-8 14-9 4 1 2 5-2 6-3 1-4-1-6 1-1 4-6 6-6 2z" stroke="#333" strokeWidth="1.500" /><path d="m1 2 17 15M17 1 2 17" stroke="#d32a2a" strokeWidth="1.800" /></svg>
        </ModeButton>
        <Hint><HintText>МАСШТАБ: Увеличение масштаба рабочего поля - левая кнопка мыши, Уменьшение - правая</HintText></Hint>
      </StatusBar>

      <Taskbar>
        <Start aria-label="Пуск"><svg width="17" height="15" viewBox="0 0 17 15"><path d="M0 2l7-1v6H0zM8 1l9-1v7H8zM0 8h7v6l-7-1zM8 8h9v7l-9-1z" fill="#fff" /></svg></Start>
        <TaskButton aria-label="Проводник"><Icon s={13}><path d="M1 2h4l1 1h5v7H1z" fill="#e5d98a" stroke="#c9bd72" /><path d="M2 7h8v3H2z" fill="#7fb77f" stroke="none" /></Icon></TaskButton>
        <TaskButton aria-label="Плеер"><Icon s={13}><circle cx="6" cy="6" r="5" fill="#dff2d2" stroke="#3dab3a" strokeWidth="2" /><path d="M5 4v4l3-2z" fill="#2c8f2c" stroke="none" /></Icon></TaskButton>
        <TaskButton $open aria-label="Файловый менеджер"><Icon s={13}><path d="M1 1h10v10H1z" fill="#26268a" stroke="#26268a" /><path d="M3 0h6v4H3zM2 7h8v5H2z" fill="#f2eef2" stroke="none" /><path d="M2 6h8" stroke="#d22" /></Icon></TaskButton>
        <TaskButton $open aria-label="Браузер"><Icon s={13}><circle cx="6" cy="6" r="4" stroke="#d6433a" strokeWidth="3" /><path d="M2 4a4 4 0 0 0 4 6" stroke="#3fa14c" strokeWidth="3" /><path d="M10 5a4 4 0 0 1-4 5" stroke="#e9c83c" strokeWidth="3" /><circle cx="6" cy="6" r="2" fill="#4a84d8" stroke="#fff" /></Icon></TaskButton>
        <TaskButton $open aria-label="Просмотр"><Icon s={13}><path d="M1 2h10v8H1z" fill="#d8f0fa" stroke="#fff" /><path d="M3 6h6v2H3z" fill="#2c7fae" stroke="none" /></Icon></TaskButton>
        <TaskButton $open $active aria-label="Sprint-Layout"><Gem s={14} /></TaskButton>
        <Tray>
          <Chevron d="M2 5h4L4 3z" />
          <Icon s={11}><path d="M1 1v3h3V1M2.500 4v7M6 2h4v9H6z" fill="#fff" stroke="#fff" strokeWidth="1.300" /></Icon>
          <Icon s={11}><path d="M1 4h2l3-3v10L3 8H1z" fill="#fff" stroke="#fff" /><path d="M8 4q1.500 2 0 4" stroke="#fff" /></Icon>
          <Lang>РУС</Lang>
          <time>23:35</time>
        </Tray>
      </Taskbar>
    </Window>
  );
}
